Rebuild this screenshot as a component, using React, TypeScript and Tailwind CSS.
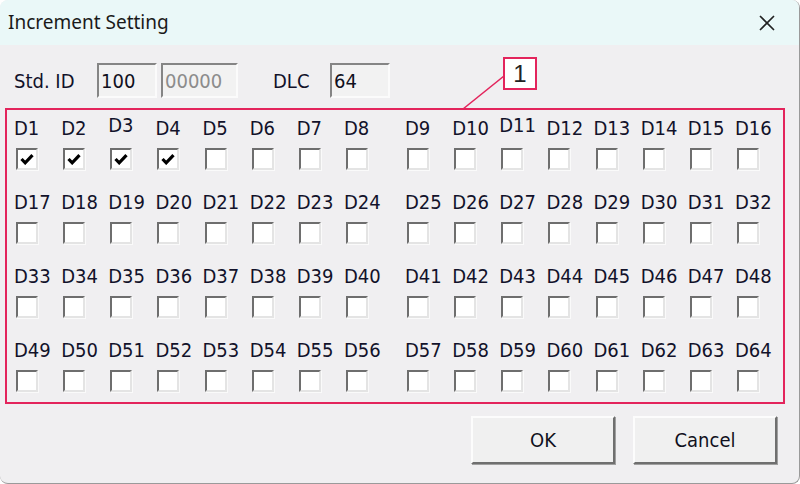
import { X } from 'lucide-react';

const checked = [1, 2, 3, 4];
const raised = ['D3', 'D11'];

function Checkbox({ on }: { on: boolean }) {
  return (
    <div className="ml-[2px] w-[22px] h-[22px] bg-white border-2 border-t-[#6e6e6e] border-l-[#6e6e6e] border-b-[#e4e4e4] border-r-[#e4e4e4] shadow-[1px_1px_0_#fafafa] flex items-center justify-center">
      {on && (
        <svg width="14" height="12" viewBox="0 0 14 12">
          <path d="M1.5 6 L5.2 9.8 L12.5 2.2" fill="none" stroke="#000" strokeWidth="3.2" />
        </svg>
      )}
    </div>
  );
}

function Cell({ n }: { n: number }) {
  const label = `D${n}`;
  return (
    <div className="flex flex-col">
      <span
        className={`h-[24px] leading-[24px] text-[20px] text-[#12122a] ${raised.includes(label) ? '-mt-[3px] mb-[3px]' : ''}`}
      >
        {label}
      </span>
      <div className="mt-[8px]">
        <Checkbox on={checked.includes(n)} />
      </div>
    </div>
  );
}

function Field({ value, width, muted }: { value: string; width: string; muted?: boolean }) {
  return (
    <div
      className={`${width} h-[35px] bg-[#f2f2f2] border-2 border-t-[#858585] border-l-[#858585] border-b-[#fbfbfb] border-r-[#fbfbfb] flex items-center pl-[2px] text-[20px] ${muted ? 'text-[#8c8c8c]' : 'text-[#101020]'}`}
    >
      {value}
    </div>
  );
}

function WinButton({ label }: { label: string }) {
  return (
    <button className="w-[144px] h-[48px] bg-[#f0f0f0] border-2 border-t-[#fcfcfc] border-l-[#fcfcfc] border-b-[#6f6f6f] border-r-[#6f6f6f] shadow-[1px_1px_0_#a0a0a0] text-[20px] text-[#101020]">
      {label}
    </button>
  );
}

export default function App() {
  const rows = [0, 1, 2, 3];
  return (
    <div
      className="relative w-[800px] h-[484px] overflow-hidden bg-[#f0eff1] rounded-[8px] border-r border-b border-[#9a9a9a]"
      style={{ fontFamily: '"DejaVu Sans", sans-serif', fontStretch: 'semi-condensed' }}
    >
      {/* Title bar */}
      <div className="h-[45px] bg-[#eaf8f8] flex items-center justify-between pl-[8px] pr-[19px]">
        <span className="text-[19px] text-[#1a1a1a]" style={{ fontFamily: '"Noto Sans", sans-serif', fontStretch: 'normal' }}>
          Increment Setting
        </span>
        <X className="w-[26px] h-[26px] text-[#222]" strokeWidth={1.6} />
      </div>

      {/* ID row */}
      <div className="mt-[18px] h-[35px] flex items-center pl-[14px] text-[20px] text-[#12122a]">
        <span className="w-[83px]">Std. ID</span>
        <Field value="100" width="w-[60px]" />
        <div className="w-[4px]" />
        <Field value="00000" width="w-[77px]" muted />
        <span className="ml-[35px] w-[57px]">DLC</span>
        <Field value="64" width="w-[60px]" />
      </div>

      {/* Data bytes */}
      <div className="mt-[10px] ml-[5px] w-[780px] h-[296px] border-2 border-[#e3245c] pt-[6px] pl-[7px]">
        <div className="flex flex-col gap-[20px]">
          {rows.map((r) => (
            <div key={r} className="flex gap-[14px]">
              <div className="grid grid-cols-8 w-[377px]">
                {Array.from({ length: 8 }, (_, i) => (
                  <Cell key={i} n={r * 16 + i + 1} />
                ))}
              </div>
              <div className="grid grid-cols-8 w-[377px]">
                {Array.from({ length: 8 }, (_, i) => (
                  <Cell key={i} n={r * 16 + i + 9} />
                ))}
              </div>
            </div>
          ))}
        </div>
      </div>

      {/* Callout */}
      <svg className="absolute left-0 top-0 pointer-events-none" width="800" height="484">
        <line x1="463" y1="109" x2="504" y2="76" stroke="#e3245c" strokeWidth="1.6" />
      </svg>
      <div className="absolute left-[503px] top-[57px] w-[34px] h-[33px] bg-white border-2 border-[#e3245c] flex items-center justify-center text-[24px] text-[#222]" style={{ fontFamily: '"Liberation Sans", sans-serif', fontStretch: 'normal' }}>
        1
      </div>

      {/* Buttons */}
      <div className="mt-[12px] flex justify-end gap-[18px] pr-[22px]">
        <WinButton label="OK" />
        <WinButton label="Cancel" />
      </div>
    </div>
  );
}
